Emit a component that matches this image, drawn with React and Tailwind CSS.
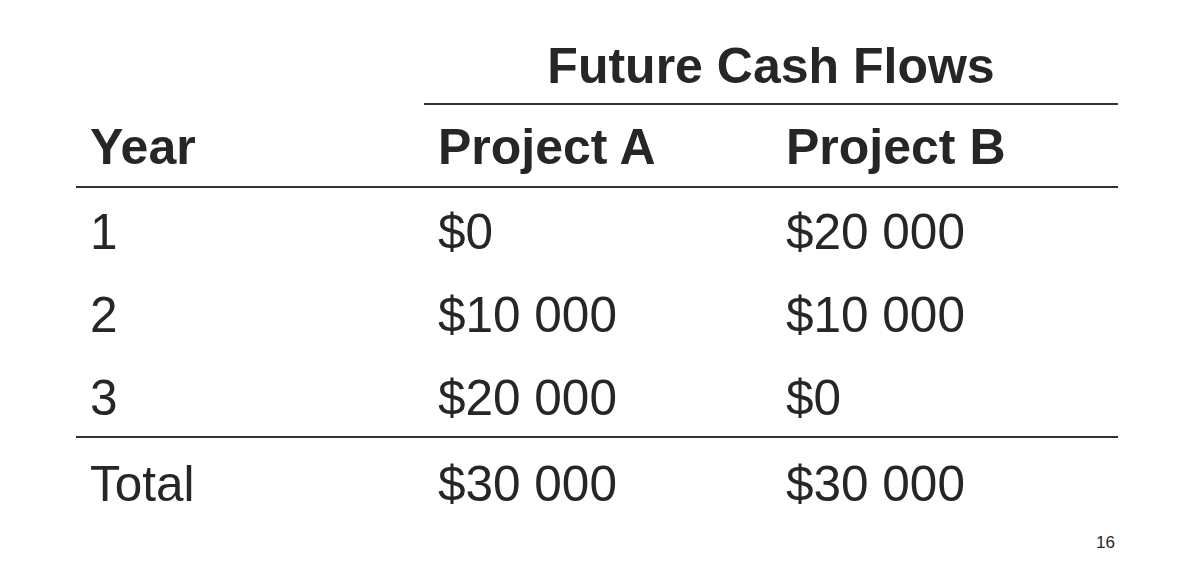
export default function App() {
  const rows = [
    ["1", "$0", "$20 000"],
    ["2", "$10 000", "$10 000"],
    ["3", "$20 000", "$0"],
  ];

  return (
    <div className="w-[1190px] h-[586px] bg-white text-[#262626] font-['Liberation_Sans',Arial,sans-serif] overflow-hidden">
      <div className="ml-[76px] w-[1042px]">
        {/* title over the two project columns */}
        <div className="grid grid-cols-[348px_1fr]">
          <div />
          <div className="pt-[36px] pb-[7px] border-b-2 border-[#333] text-center text-[50px] leading-[60px] font-bold">
            Future Cash Flows
          </div>
        </div>

        {/* header row */}
        <div className="grid grid-cols-[348px_348px_1fr] border-b-2 border-[#333] pt-[4px] text-[50px] leading-[77px] font-bold">
          <div className="pl-[14px]">Year</div>
          <div className="pl-[14px]">Project A</div>
          <div className="pl-[14px]">Project B</div>
        </div>

        {/* body rows */}
        <div className="h-[250px] pt-[2px] border-b-2 border-[#333] text-[49.5px]">
          {rows.map((r) => (
            <div key={r[0]} className="grid grid-cols-[348px_348px_1fr] h-[83px] leading-[83px]">
              <div className="pl-[14px]">{r[0]}</div>
              <div className="pl-[14px]">{r[1]}</div>
              <div className="pl-[14px]">{r[2]}</div>
            </div>
          ))}
        </div>

        {/* total */}
        <div className="grid grid-cols-[348px_348px_1fr] pt-[4px] text-[49.5px] leading-[83px]">
          <div className="pl-[14px]">Total</div>
          <div className="pl-[14px]">$30 000</div>
          <div className="pl-[14px]">$30 000</div>
        </div>

        <div className="flex justify-end pr-[3px] mt-[8px] text-[17px] leading-[20px]">16</div>
      </div>
    </div>
  );
}
